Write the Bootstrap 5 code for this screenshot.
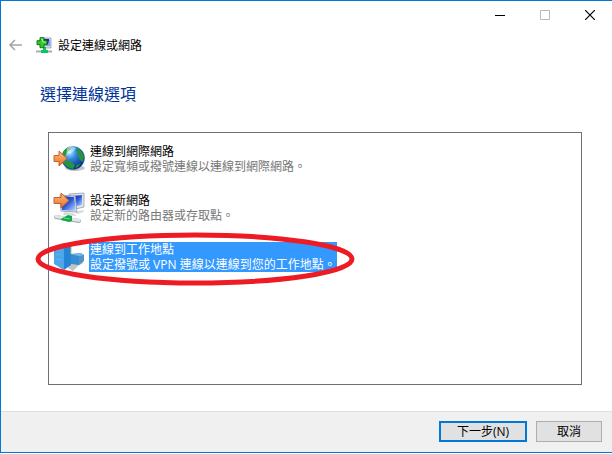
<!DOCTYPE html>
<html lang="zh-Hant">
<head>
<meta charset="utf-8">
<meta name="viewport" content="width=device-width, initial-scale=1">
<title>設定連線或網路</title>
<link href="https://cdn.jsdelivr.net/npm/bootstrap@5.3.0/dist/css/bootstrap.min.css" rel="stylesheet">
<style>
body { font-family: "Open Sans", "Noto Sans CJK TC", sans-serif; font-size: 12px; line-height: 15px; color: #000; background: #fff; }
.wizard { border: solid #0078d7; border-width: 1px 0 1px 1px; margin-bottom: 1px; min-height: calc(100vh - 1px); }
.caption-btn { width: 45px; height: 28px; padding: 0; border: 0; border-radius: 0; display: flex; align-items: center; justify-content: center; }
.caption-btn:disabled { border: 0; opacity: 1; }
.back-btn { width: 16px; height: 16px; padding: 0; border: 0; display: flex; }
.back-btn:disabled { opacity: 1; border: 0; }
.nav-line { padding-left: 7px; gap: 12px; margin-top: 6px; height: 20px; }
.app-name { gap: 6px; }
.wizard h1 { font-size: 16px; line-height: 24px; color: #003399; margin: 27px 0 0 39px; font-weight: 400; }
.options { border: 1px solid #6b717a; margin: 26px 30px 26px 47px; padding: 1px 4px; }
.option { display: flex; align-items: center; gap: 4px; height: 49px; padding: 0; border: 0; background: none; color: #000; text-align: left; position: relative; width: 100%; }
.option > svg { flex: none; }
.option-text { display: block; padding: 0 1px; white-space: nowrap; }
.option-text span { display: block; }
.option-note { color: #777; }
.option.chosen .option-text, .option.chosen .option-note { color: #fff; }
.option.chosen .option-text { background: #3399ff; }
.ring { position: absolute; left: -18px; top: 0; pointer-events: none; }
.actions { background: #f0f0f0; border-top: 1px solid #dfdfdf; padding: 9px 10px 10px; gap: 9px; }
.wiz-btn { font-size: 12px; line-height: 15px; height: 21px; padding: 0; border-radius: 0; background: #e1e1e1; border: 1px solid #adadad; color: #000; width: 66px; display: flex; align-items: center; justify-content: center; }
.wiz-btn.next { width: 88px; border: 2px solid #0078d7; }
</style>
<script src="https://cdn.jsdelivr.net/npm/bootstrap@5.3.0/dist/js/bootstrap.bundle.min.js"></script>
</head>
<body>
<main class="wizard d-flex flex-column">
  <header>
    <div class="d-flex justify-content-end">
      <button class="btn caption-btn" type="button" aria-label="最小化"><svg width="10" height="10" viewBox="0 0 10 10"><path d="M0 5.5h10" stroke="#000"/></svg></button>
      <button class="btn caption-btn" type="button" aria-label="最大化" disabled><svg width="10" height="10" viewBox="0 0 10 10"><path d="M.5.5h9v9h-9z" fill="none" stroke="#bdb7bf"/></svg></button>
      <button class="btn caption-btn" type="button" aria-label="關閉"><svg width="10" height="10" viewBox="0 0 10 10"><path d="M0 0l10 10M10 0L0 10" stroke="#000" stroke-width="1.2"/></svg></button>
    </div>
    <div class="nav-line d-flex align-items-center">
      <button class="btn back-btn" type="button" aria-label="上一步" disabled><svg width="16" height="16" viewBox="0 0 16 16"><path d="M14 8H2M7 3L2 8l5 5" fill="none" stroke="#a5a5aa" stroke-width="1.6"/></svg></button>
      <div class="app-name d-flex align-items-center">
        <svg width="16" height="16" viewBox="0 0 16 16"><path d="M5 1h10v10H8z" fill="#d2d8e2" stroke="#909aaa" stroke-width=".8"/><path d="M7 2h6v6H8z" fill="#1725b5"/><path d="M13 3h1v6H9l3-2z" fill="#7da6ee"/><path d="M0 14.5h16" stroke="#a5adb0" stroke-width="2"/><path d="M7 10h3v3h2v3H5v-3h2z" fill="#08c666"/><path d="M4 .7h4v3h3v4H8v3H4v-3H1v-4h3z" fill="#35c82e" stroke="#127815"/><path d="M5 2h1.500v3H10" fill="none" stroke="#9ff879"/></svg>
        <span>設定連線或網路</span>
      </div>
    </div>
    <h1>選擇連線選項</h1>
  </header>
  <section class="options flex-grow-1" aria-label="選擇連線選項">
    <button class="option" type="button">
      <svg width="32" height="32" viewBox="0 0 32 32">
        <defs><radialGradient id="sea" cx=".35" cy=".25" r=".75"><stop stop-color="#b5e9ff"/><stop offset=".4" stop-color="#3189dc"/><stop offset="1" stop-color="#082d8d"/></radialGradient><linearGradient id="orange" x2="0" y2="1"><stop stop-color="#ffc184"/><stop offset="1" stop-color="#ee6a20"/></linearGradient></defs>
        <ellipse cx="22" cy="25" rx="10" ry="3" fill="#c4c5c9"/>
        <circle cx="20" cy="15" r="11.500" fill="url(#sea)" stroke="#346ba6" stroke-width=".6"/>
        <path d="M10 10c1-3 4-6 7-6l1 2-3 2-1 3-4 3zM24 5l4 3 3 5-1 6-3-2-2-4 1-2-3-3zM10 18l7 0 5 4-2 4c-5-1-9-4-10-8zM24 22l4-2-3 4-3 1z" fill="#279638"/>
        <path d="M14 5c3-2 7-2 9 0-2 4-6 6-10 7z" fill="#e8faff" opacity=".5"/>
        <path d="M1 12.500h5V8l8 7.500-8 7.500v-4.500H1z" fill="url(#orange)" stroke="#c8632d"/>
      </svg>
      <span class="option-text"><span>連線到網際網路</span><span class="option-note">設定寬頻或撥號連線以連線到網際網路。</span></span>
    </button>
    <button class="option" type="button">
      <svg width="32" height="32" viewBox="0 0 32 32">
        <defs><linearGradient id="screen" x2="1" y2="1"><stop stop-color="#071aa0"/><stop offset=".5" stop-color="#315bdc"/><stop offset="1" stop-color="#c0e8ff"/></linearGradient></defs>
        <path d="M16 2l15-1v14l-13 3z" fill="#e1e4e8" stroke="#a9b0ba"/><path d="M19 4l10-1v10l-9 2z" fill="url(#screen)"/>
        <path d="M22 20l8-2 1 2-7 2z" fill="#d6dadd"/>
        <path d="M7 3l15 1 2 16-16-1z" fill="#e3e6eb" stroke="#9ca7b5"/><path d="M8 4l13 1 2 14-14-1z" fill="url(#screen)"/>
        <path d="M11 20l9 1 4 3-14-1z" fill="#d6dadd"/>
        <path d="M3 25l23 4" stroke="#9ea8a8" stroke-width="4" stroke-linecap="round"/><path d="M3 24.500l23 4" stroke="#e1e7e5" stroke-width="3" stroke-linecap="round"/>
        <path d="M8 27l7-4 4 1v5l-3 1-8-2z" fill="#12a54b"/><path d="M11 26l6 1" stroke="#68e68d"/>
        <path d="M1 5.500h7V1l8 7.500L8 16v-4.500H1z" fill="url(#orange)" stroke="#bc642d"/>
      </svg>
      <span class="option-text"><span>設定新網路</span><span class="option-note">設定新的路由器或存取點。</span></span>
    </button>
    <button class="option chosen" type="button" aria-pressed="true">
      <svg width="32" height="32" viewBox="0 0 32 32">
        <path d="M15 27l5 3 5-5 5-3v-3l-12-1z" fill="#bfc7ca"/>
        <path d="M1 6l10-4v27L1 23z" fill="#4ba6ea"/><path d="M11 2l7 3v19l-7 5z" fill="#2584d4"/>
        <path d="M17 5l1 1v7" fill="none" stroke="#9fce67"/>
        <path d="M18 13l10-1 3 2v6l-5 4-8-1z" fill="#5292c7"/><path d="M18 13l8 2v9l-8-2z" fill="#348dd4"/><path d="M18 13l10-1 3 2-5 1z" fill="#79b9e6"/>
        <path d="M3 10l6-2M3 14l6-1M3 18l6 1" stroke="#62b2ee"/>
      </svg>
      <span class="option-text"><span>連線到工作地點</span><span class="option-note">設定撥號或 VPN 連線以連線到您的工作地點。</span></span>
      <svg class="ring" width="320" height="54" viewBox="0 0 320 54" aria-hidden="true"><ellipse cx="160" cy="27" rx="157" ry="24" fill="none" stroke="#ed1c24" stroke-width="5"/></svg>
    </button>
  </section>
  <footer class="actions d-flex justify-content-end">
    <button class="btn wiz-btn next" type="button">下一步(N)</button>
    <button class="btn wiz-btn" type="button">取消</button>
  </footer>
</main>
</body>
</html>
